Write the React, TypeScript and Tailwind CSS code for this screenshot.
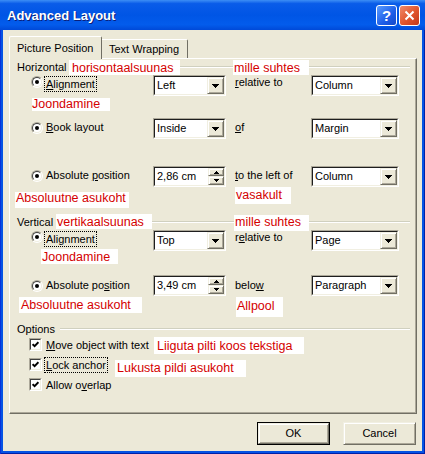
import type { ReactNode } from "react";

const sans = "font-['Liberation_Sans',Arial,sans-serif]";

function Arrow({ up = false, small = false }: { up?: boolean; small?: boolean }) {
  const rows = small ? [5, 3, 1] : [7, 5, 3, 1];
  const w = rows[0];
  const h = rows.length;
  const list = up ? [...rows].reverse() : rows;
  return (
    <svg width={w} height={h} viewBox={`0 0 ${w} ${h}`} shapeRendering="crispEdges">
      {list.map((n, i) => (
        <rect key={i} x={(w - n) / 2} y={i} width={n} height={1} fill="#000" />
      ))}
    </svg>
  );
}

function Raised({ className, children }: { className: string; children: ReactNode }) {
  return (
    <div
      className={`flex items-center justify-center border border-t-[#f1efe2] border-l-[#f1efe2] border-r-[#716f64] border-b-[#716f64] bg-[#ece9d8] shadow-[inset_1px_1px_0_#fff,inset_-1px_-1px_0_#aca899] ${className}`}
    >
      {children}
    </div>
  );
}

function Field({ width, spin = false, children }: { width: string; spin?: boolean; children: ReactNode }) {
  return (
    <div className={`h-[21px] shrink-0 border border-t-[#aca899] border-l-[#aca899] border-r-white border-b-white ${width}`}>
      <div className="flex h-full border border-t-[#1e1e1e] border-l-[#1e1e1e] border-r-[#f1efe2] border-b-[#f1efe2] bg-white">
        <span className="flex-1 pl-[2px] leading-[17px]">{children}</span>
        {spin ? (
          <div className="flex w-[16px] flex-col">
            <Raised className="h-[8px]">
              <Arrow up small />
            </Raised>
            <Raised className="h-[9px]">
              <Arrow small />
            </Raised>
          </div>
        ) : (
          <Raised className="w-[17px]">
            <Arrow />
          </Raised>
        )}
      </div>
    </div>
  );
}

function Radio({ className = "" }: { className?: string }) {
  return (
    <div className={`size-[12px] shrink-0 rounded-full border border-t-[#aca899] border-l-[#aca899] border-r-white border-b-white ${className}`}>
      <div className="flex size-full items-center justify-center rounded-full border border-t-[#404040] border-l-[#404040] border-r-[#f1efe2] border-b-[#f1efe2] bg-white">
        <div className="size-[4px] rounded-full bg-black" />
      </div>
    </div>
  );
}

function Check() {
  return (
    <div className="size-[13px] shrink-0 border border-t-[#aca899] border-l-[#aca899] border-r-white border-b-white">
      <div className="flex size-full items-center justify-center border border-t-[#404040] border-l-[#404040] border-r-[#f1efe2] border-b-[#f1efe2] bg-white">
        <svg width="7" height="7" viewBox="0 0 7 7">
          <path d="M0.6 3.2 L2.6 5.2 L6.4 1.2" fill="none" stroke="#000" strokeWidth="1.9" />
        </svg>
      </div>
    </div>
  );
}

function Row(props: {
  className: string;
  off: string;
  label: ReactNode;
  focus?: boolean;
  left: string;
  spin?: boolean;
  mid: ReactNode;
  right: string;
}) {
  return (
    <div className={`flex h-[21px] items-start pl-[21px] ${props.className}`}>
      <div className={`flex w-[122px] shrink-0 items-start ${props.off}`}>
        <Radio className={props.focus ? "" : "mt-[1px]"} />
        {props.focus ? (
          <span className="ml-[1px] border border-dotted border-black px-[1px] leading-[14px]">{props.label}</span>
        ) : (
          <span className="ml-[3px]">{props.label}</span>
        )}
      </div>
      <Field width="w-[73px]" spin={props.spin}>
        {props.left}
      </Field>
      <div className={`w-[85px] shrink-0 pl-[9px] ${props.off}`}>{props.mid}</div>
      <Field width="w-[88px]">{props.right}</Field>
    </div>
  );
}

function Group({ className, label }: { className: string; label: string }) {
  return (
    <div className={`flex items-start pr-[6px] pl-[7px] ${className}`}>
      <span>{label}</span>
      <div className="mt-[5px] ml-[5px] h-[2px] flex-1 border-t border-b border-t-[#d0d0bf] border-b-white" />
    </div>
  );
}

const notes = [
  { t: "horisontaalsuunas", c: "left-[69px] top-[60px] w-[111px] h-[15px] pt-[2px] pl-[3px]" },
  { t: "mille suhtes", c: "left-[233px] top-[60px] w-[76px] h-[15px] pt-[2px] pl-[1px]" },
  { t: "Joondamine", c: "left-[32px] top-[98px] w-[78px] h-[13px] pt-[0px] pl-[0px]" },
  { t: "Absoluutne asukoht", c: "left-[15px] top-[192px] w-[114px] h-[16px] pt-[0px] pl-[1px]" },
  { t: "vasakult", c: "left-[235px] top-[187px] w-[56px] h-[17px] pt-[2px] pl-[1px]" },
  { t: "vertikaalsuunas", c: "left-[56px] top-[214px] w-[96px] h-[15px] pt-[2px] pl-[1px]" },
  { t: "mille suhtes", c: "left-[234px] top-[215px] w-[75px] h-[16px] pt-[1px] pl-[1px]" },
  { t: "Joondamine", c: "left-[41px] top-[249px] w-[77px] h-[15px] pt-[2px] pl-[1px]" },
  { t: "Absoluutne asukoht", c: "left-[19px] top-[297px] w-[123px] h-[16px] pt-[2px] pl-[2px]" },
  { t: "Allpool", c: "left-[236px] top-[297px] w-[47px] h-[20px] pt-[3px] pl-[1px]" },
  { t: "Liiguta pilti koos tekstiga", c: "left-[154px] top-[337px] w-[150px] h-[17px] pt-[3px] pl-[3px]" },
  { t: "Lukusta pildi asukoht", c: "left-[115px] top-[360px] w-[131px] h-[17px] pt-[2px] pl-[2px]" },
];

export default function App() {
  return (
    <div
      className={`relative flex h-[454px] w-[425px] flex-col bg-[#0553e4] shadow-[inset_1px_0_0_#0831d9,inset_-1px_0_0_#0020a8,inset_0_-1px_0_#0020a8] text-[11px] leading-[13px] text-black ${sans}`}
    >
      {/* title bar */}
      <div className="flex h-[30px] shrink-0 items-center bg-[linear-gradient(to_bottom,#3d8ef5_0%,#0a5ce9_12%,#0055e5_50%,#035cec_82%,#0049d8_100%)] pr-[5px] pl-[7px]">
        <span className="flex-1 text-[13px] font-bold text-white [text-shadow:1px_1px_0_#0a1f7a]">Advanced Layout</span>
        <div className="flex size-[21px] items-center justify-center rounded-[3px] border border-white bg-[linear-gradient(135deg,#5a9cff,#1d5de8_60%,#1448c8)] text-[15px] font-bold text-white">
          ?
        </div>
        <div className="ml-[2px] flex size-[21px] items-center justify-center rounded-[3px] border border-white bg-[linear-gradient(135deg,#f08a6a,#e0542c_55%,#c2381a)]">
          <svg width="11" height="11" viewBox="0 0 11 11">
            <path d="M1.5 1.5 L9.5 9.5 M9.5 1.5 L1.5 9.5" stroke="#fff" strokeWidth="2" />
          </svg>
        </div>
      </div>

      {/* dialog body */}
      <div className="mx-[3px] mb-[3px] flex-1 bg-[#ece9d8] pt-[6px]">
        <div className="flex h-[22px] items-end pl-[6px]">
          <div className="relative z-10 -mb-px h-[23px] w-[93px] rounded-t-[2px] border-t border-l border-r border-t-white border-l-white border-r-[#716f64] bg-[#ece9d8] pt-[5px] pl-[7px]">
            Picture Position
          </div>
          <div className="h-[19px] w-[86px] rounded-tr-[2px] border-t border-r border-t-white border-r-[#716f64] bg-[#ece9d8] pt-[3px] pl-[7px]">
            Text Wrapping
          </div>
        </div>

        <div className="ml-[6px] h-[356px] w-[408px] border border-t-white border-l-white border-r-[#716f64] border-b-[#716f64] shadow-[inset_-1px_-1px_0_#aca899]">
          <Group className="mt-[2px]" label="Horizontal" />
          <Row
            className="mt-[1px]"
            off="mt-[1px]"
            focus
            label={<><u>A</u>lignment</>}
            left="Left"
            mid={<><u>r</u>elative to</>}
            right="Column"
          />
          <Row
            className="mt-[22px]"
            off="mt-[3px]"
            label={<><u>B</u>ook layout</>}
            left="Inside"
            mid={<><u>o</u>f</>}
            right="Margin"
          />
          <Row
            className="mt-[27px]"
            off="mt-[3px]"
            label={<>Absolute <u>p</u>osition</>}
            left="2,86 cm"
            spin
            mid={<><u>t</u>o the left of</>}
            right="Column"
          />
          <Group className="mt-[29px]" label="Vertical" />
          <Row
            className="mt-[1px]"
            off="mt-[1px]"
            focus
            label="Alignment"
            left="Top"
            mid={<>r<u>e</u>lative to</>}
            right="Page"
          />
          <Row
            className="mt-[24px]"
            off="mt-[4px]"
            label={<>Absolute po<u>s</u>ition</>}
            left="3,49 cm"
            spin
            mid={<>belo<u>w</u></>}
            right="Paragraph"
          />
          <Group className="mt-[27px]" label="Options" />
          <div className="mt-[2px] flex h-[13px] items-start pl-[19px]">
            <Check />
            <span className="mt-[1px] ml-[4px]">
              <u>M</u>ove object with text
            </span>
          </div>
          <div className="mt-[7px] flex h-[13px] items-start pl-[19px]">
            <Check />
            <span className="-mt-px ml-[2px] border border-dotted border-black px-[1px] leading-[14px]">
              <u>L</u>ock anchor
            </span>
          </div>
          <div className="mt-[7px] flex h-[13px] items-start pl-[19px]">
            <Check />
            <span className="mt-[1px] ml-[4px]">
              Allow o<u>v</u>erlap
            </span>
          </div>
        </div>

        <div className="mt-[8px] flex justify-end gap-[13px] pr-[6px]">
          <div className="h-[23px] w-[73px] border border-black">
            <Raised className="size-full">OK</Raised>
          </div>
          <Raised className="h-[23px] w-[73px]">Cancel</Raised>
        </div>
      </div>

      {notes.map((n, i) => (
        <div
          key={i}
          className={`absolute bg-white text-[12.5px] leading-[13px] whitespace-nowrap text-[#d40000] ${n.c}`}
        >
          {n.t}
        </div>
      ))}
    </div>
  );
}
